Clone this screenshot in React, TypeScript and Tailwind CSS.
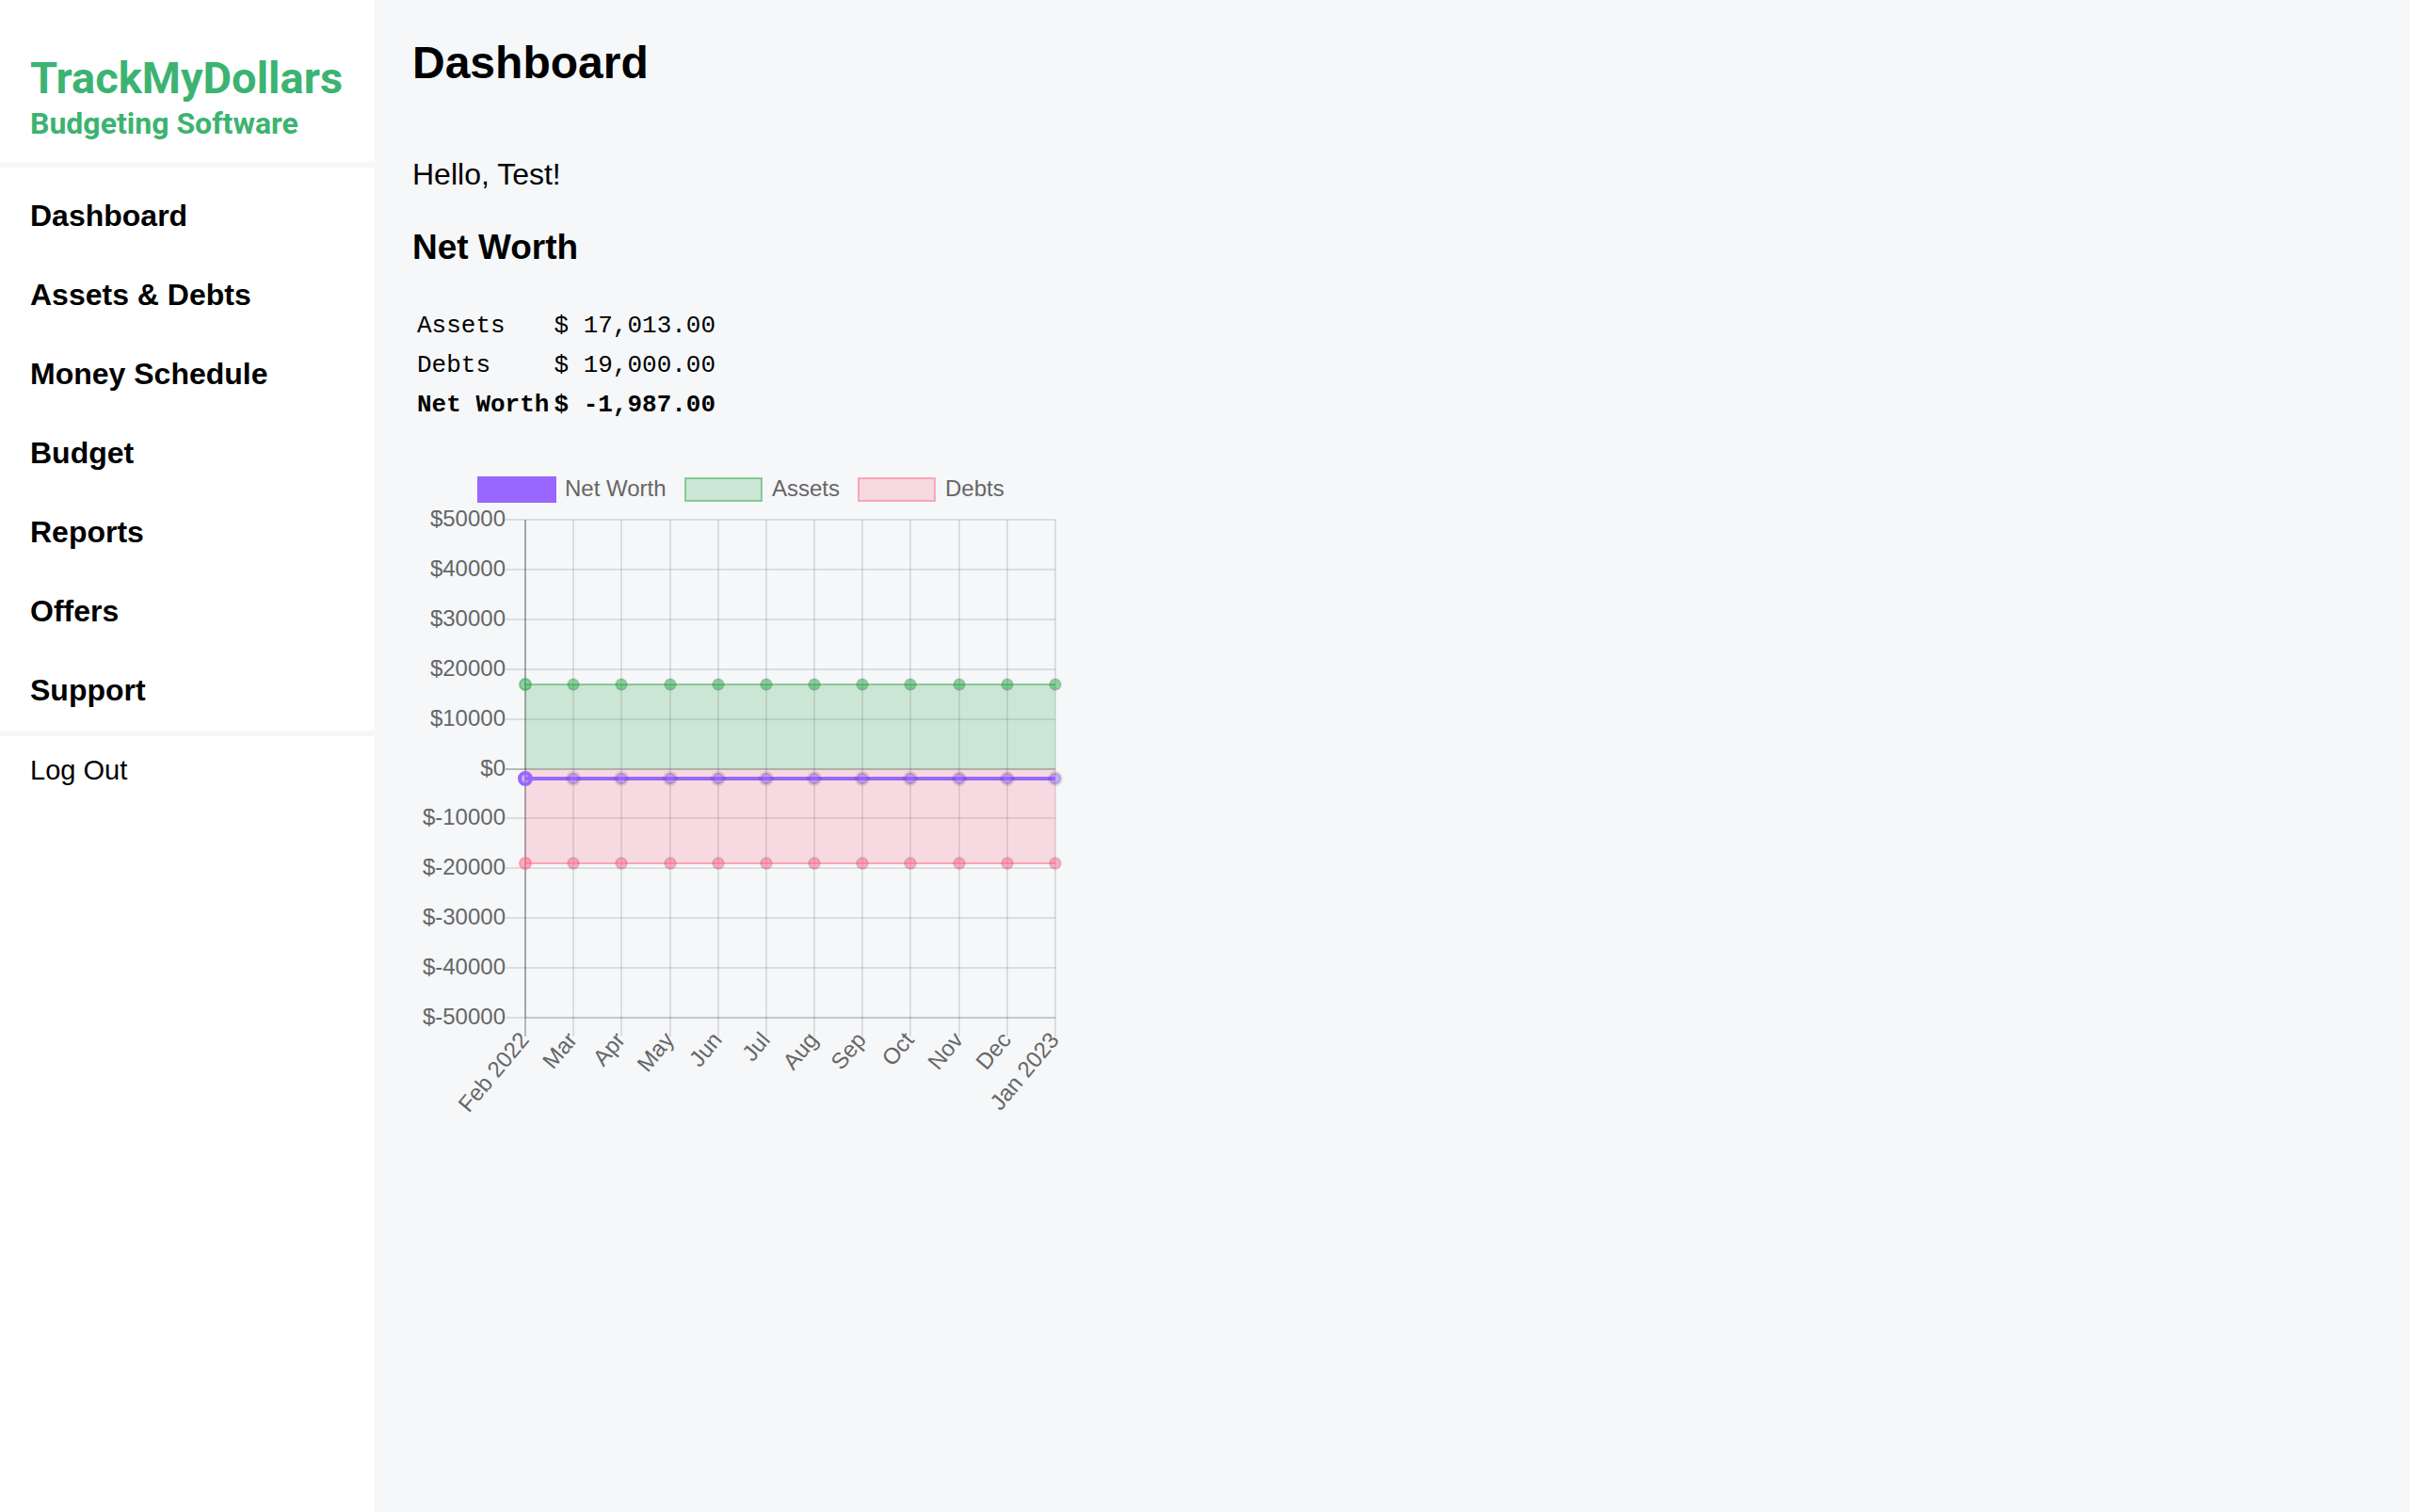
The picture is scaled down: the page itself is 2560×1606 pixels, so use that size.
const NAV = ["Dashboard", "Assets & Debts", "Money Schedule", "Budget", "Reports", "Offers", "Support"];
const MONTHS = ["Feb 2022", "Mar", "Apr", "May", "Jun", "Jul", "Aug", "Sep", "Oct", "Nov", "Dec", "Jan 2023"];
const TICKS = [50000, 40000, 30000, 20000, 10000, 0, -10000, -20000, -30000, -40000, -50000];

// Plot area inside the 700 x 700 chart drawing
const LEFT = 120;
const RIGHT = 683;
const TOP = 62;
const BOTTOM = 591;
const px = (i: number) => Math.round(LEFT + (i * (RIGHT - LEFT)) / 11);
const py = (v: number) => Math.round(TOP + ((50000 - v) / 100000) * (BOTTOM - TOP));

const SERIES = [
  { value: -19000, color: "rgb(255,99,132)", border: "rgba(255,99,132,0.5)" },
  { value: 17013, color: "rgb(40,167,69)", border: "rgba(40,167,69,0.5)" },
];

function Points({ value, color, first, width = 2 }: { value: number; color: string; first: string; width?: number }) {
  return (
    <>
      {MONTHS.map((m, i) => (
        <circle
          key={m}
          cx={px(i)}
          cy={py(value)}
          r={6}
          fill={color}
          fillOpacity={0.5}
          stroke={i === 0 ? first : "rgba(0,0,0,0.1)"}
          strokeWidth={width}
        />
      ))}
    </>
  );
}

function NetWorthChart() {
  const mid = py(0);
  return (
    <svg viewBox="0 0 700 700" className="block w-[700px] max-w-full font-['Liberation_Sans',Arial,sans-serif] text-[24px]" role="img" aria-label="Net worth history">
      <rect x="69" y="16" width="84" height="28" fill="#9966ff" />
      <rect x="290" y="18" width="81" height="24" fill="rgba(40,167,69,0.2)" stroke="rgba(40,167,69,0.5)" strokeWidth="2" />
      <rect x="474" y="18" width="81" height="24" fill="rgba(255,99,132,0.2)" stroke="rgba(255,99,132,0.5)" strokeWidth="2" />
      <g fill="#666666">
        <text x="162" y="37">Net Worth</text>
        <text x="382" y="37">Assets</text>
        <text x="566" y="37">Debts</text>
      </g>

      <g strokeWidth="2">
        {TICKS.map((t) => (
          <line key={t} x1="99" x2={RIGHT} y1={py(t)} y2={py(t)} stroke={t === 0 ? "rgba(0,0,0,0.25)" : "rgba(0,0,0,0.1)"} />
        ))}
        {MONTHS.map((m, i) => (
          <line key={m} x1={px(i)} x2={px(i)} y1={TOP} y2="611" stroke={i === 0 ? "rgba(0,0,0,0.25)" : "rgba(0,0,0,0.1)"} />
        ))}
        <line x1={LEFT} x2={LEFT} y1={TOP} y2={BOTTOM} stroke="rgba(0,0,0,0.1)" />
        <line x1={LEFT} x2={RIGHT} y1={BOTTOM} y2={BOTTOM} stroke="rgba(0,0,0,0.1)" />
      </g>

      <g fill="#666666">
        {TICKS.map((t) => (
          <text key={t} x="99" y={py(t) + 7} textAnchor="end">{`$${t}`}</text>
        ))}
        {MONTHS.map((m, i) => (
          <text key={m} x="0" y="8" textAnchor="end" transform={`translate(${px(i) - 1} 610) rotate(-50)`}>
            {m}
          </text>
        ))}
      </g>

      {SERIES.map((s) => (
        <g key={s.value}>
          <rect x={LEFT} y={Math.min(mid, py(s.value))} width={RIGHT - LEFT} height={Math.abs(py(s.value) - mid)} fill={s.color} fillOpacity={0.2} />
          <line x1={LEFT} x2={RIGHT} y1={py(s.value)} y2={py(s.value)} stroke={s.border} strokeWidth="2" />
          <Points value={s.value} color={s.color} first={s.border} />
        </g>
      ))}
      <line x1={LEFT} x2={RIGHT} y1={py(-1987)} y2={py(-1987)} stroke="#9966ff" strokeWidth="4" />
      <Points value={-1987} color="rgb(153,102,255)" first="#9966ff" width={4} />
    </svg>
  );
}

export default function App() {
  return (
    <div className="flex min-h-screen bg-[#f5f7f9] font-['Liberation_Sans',Arial,sans-serif] text-black">
      <aside className="w-[398px] shrink-0 bg-white">
        <a href="#home" className="block h-[172px] pl-8 pt-14 font-['Bahnschrift',Roboto,sans-serif] font-bold text-[#3cb371]">
          <span className="block text-[47px] leading-[54px]">TrackMyDollars</span>
          <span className="block text-[32px] leading-[42px]">Budgeting Software</span>
        </a>
        <nav className="border-y-[6px] border-[#f5f7f9] pb-px pt-[9px]">
          {NAV.map((n) => (
            <a key={n} href="#" className="block pl-8 text-[32px] font-bold leading-[84px]">
              {n}
            </a>
          ))}
        </nav>
        <a href="#logout" className="block pl-8 pt-4 text-[29px] leading-[40px]">Log Out</a>
      </aside>
      <main className="min-w-0 flex-1 pl-10 pt-8">
        <h1 className="text-[48px] font-bold leading-[70px]">Dashboard</h1>
        <p className="mt-[62px] text-[32px] leading-[42px]">Hello, Test!</p>
        <h2 className="mt-8 text-[37px] font-bold leading-[50px]">Net Worth</h2>
        <table className="mt-[37px] border-separate border-spacing-x-[5px] border-spacing-y-0 font-['Liberation_Mono',monospace] text-[26px] leading-[42px]">
          <tbody>
            <tr>
              <td>Assets</td>
              <td className="whitespace-pre">$ 17,013.00</td>
            </tr>
            <tr>
              <td>Debts</td>
              <td className="whitespace-pre">$ 19,000.00</td>
            </tr>
            <tr className="font-bold">
              <td>Net Worth</td>
              <td className="whitespace-pre">$ -1,987.00</td>
            </tr>
          </tbody>
        </table>
        <div className="mt-[39px]">
          <NetWorthChart />
        </div>
      </main>
    </div>
  );
}
